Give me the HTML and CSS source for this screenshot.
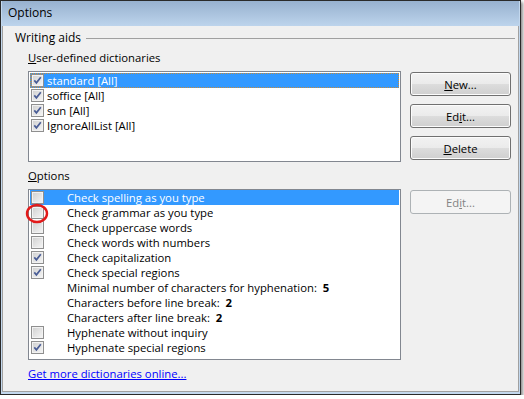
FILE: index.html
```html
<!DOCTYPE html>
<html lang="en">
<head>
    <meta charset="UTF-8">
    <title>Options</title>
    <link rel="stylesheet" href="styles.css">
</head>
<body>
    <div class="window">
        <div class="titlebar">Options</div>
        <div class="client">
            <div class="group-title"><span>Writing aids</span></div>
            <div class="group-body">
                <div class="field-label"><u>U</u>ser-defined dictionaries</div>
                <div class="field-row">
                    <div class="listbox dicts">
                        <div class="item selected focused"><span class="check on"></span><span class="name">standard [All]</span></div>
                        <div class="item"><span class="check on"></span><span class="name">soffice [All]</span></div>
                        <div class="item"><span class="check on"></span><span class="name">sun [All]</span></div>
                        <div class="item"><span class="check on"></span><span class="name">IgnoreAllList [All]</span></div>
                    </div>
                    <div class="buttons">
                        <button class="btn"><u>N</u>ew...</button>
                        <button class="btn">Ed<u>i</u>t...</button>
                        <button class="btn"><u>D</u>elete</button>
                    </div>
                </div>

                <div class="field-label options-label"><u>O</u>ptions</div>
                <div class="field-row">
                    <div class="listbox opts">
                        <div class="item selected"><span class="check"></span><span class="name">Check spelling as you type</span></div>
                        <div class="item"><span class="check"></span><span class="name">Check grammar as you type</span></div>
                        <div class="item"><span class="check"></span><span class="name">Check uppercase words</span></div>
                        <div class="item"><span class="check"></span><span class="name">Check words with numbers</span></div>
                        <div class="item"><span class="check on"></span><span class="name">Check capitalization</span></div>
                        <div class="item"><span class="check on"></span><span class="name">Check special regions</span></div>
                        <div class="item"><span class="nocheck"></span><span class="name">Minimal number of characters for hyphenation:&nbsp; <b>5</b></span></div>
                        <div class="item"><span class="nocheck"></span><span class="name">Characters before line break:&nbsp; <b>2</b></span></div>
                        <div class="item"><span class="nocheck"></span><span class="name">Characters after line break:&nbsp; <b>2</b></span></div>
                        <div class="item"><span class="check"></span><span class="name">Hyphenate without inquiry</span></div>
                        <div class="item"><span class="check on"></span><span class="name">Hyphenate special regions</span></div>
                    </div>
                    <div class="buttons">
                        <button class="btn" disabled>Ed<u>i</u>t...</button>
                    </div>
                </div>
            </div>
            <a class="more" href="#">Get more dictionaries online...</a>
        </div>
        <svg class="marker" width="26" height="22" viewBox="0 0 26 22">
            <ellipse cx="12" cy="10.5" rx="10" ry="8.5" fill="none" stroke="#e21a1a" stroke-width="2.4"/>
        </svg>
    </div>
</body>
</html>
```

FILE: styles.css
```css
body {
    margin: 0;
    background: #fff;
    font-family: "Open Sans", "Noto Sans", sans-serif;
    font-size: 11.3px;
    color: #000;
}
.window {
    position: relative;
    width: 521px;
    height: 395px;
    box-sizing: border-box;
    border: 1px solid #2a2a2a;
    padding: 0 1px 2px 1px;
    background: #c3d8ee;
    box-shadow: 2px 2px 3px rgba(0, 0, 0, 0.45);
    display: flex;
    flex-direction: column;
}
.titlebar {
    height: 25px;
    line-height: 24px;
    padding-left: 6px;
    font-size: 12px;
    background: linear-gradient(#97b1cf, #bdd4ec);
    flex: none;
}
.client {
    flex: 1;
    background: #f0f0f0;
    border: 1px solid #a0a0a0;
    border-top: none;
    padding: 4px 0 0 12px;
}
.group-title {
    display: flex;
    align-items: center;
    line-height: 16px;
    font-size: 12px;
}
.group-title::after {
    content: "";
    flex: 1;
    border-top: 1px solid #a0a0a0;
    margin: 1px 3px 0 5px;
}
.group-body {
    padding-left: 13px;
    margin-top: 4px;
}
.field-label {
    line-height: 16px;
}
.options-label {
    margin-top: 6px;
}
.field-row {
    display: flex;
    align-items: flex-start;
    gap: 9px;
    margin-top: 5px;
}
.listbox {
    width: 373px;
    box-sizing: border-box;
    border: 1px solid #828790;
    background: #fff;
    padding: 1px;
}
.dicts {
    height: 91px;
}
.opts {
    height: 171px;
    padding-top: 0;
}
.item {
    height: 15px;
    line-height: 15px;
    display: flex;
    align-items: center;
    white-space: nowrap;
    box-sizing: border-box;
}
.item.selected {
    background: #3399ff;
    color: #fff;
}
.item.focused {
    outline: 1px dotted #c78a3a;
    outline-offset: -1px;
}
.check {
    width: 13px;
    height: 13px;
    box-sizing: border-box;
    margin-left: 1px;
    border: 1px solid #8f8f8f;
    background: linear-gradient(135deg, #cfcfcf, #f6f6f6);
    box-shadow: inset 0 0 0 1px #f2f2f2;
    flex: none;
}
.check.on {
    background:
        url("data:image/svg+xml,%3Csvg xmlns='http://www.w3.org/2000/svg' width='11' height='11'%3E%3Cpath d='M2.3 5.4 L4.4 7.8 L8.8 2.2' fill='none' stroke='%234a5d96' stroke-width='1.7'/%3E%3C/svg%3E") center no-repeat,
        linear-gradient(135deg, #cfcfcf, #f6f6f6);
}
.nocheck {
    width: 13px;
    margin-left: 1px;
    flex: none;
}
.dicts .name {
    margin-left: 3px;
}
.opts .name {
    margin-left: 23px;
}
.buttons {
    display: flex;
    flex-direction: column;
    gap: 8px;
    margin-top: 1px;
}
.btn {
    width: 101px;
    height: 24px;
    font: inherit;
    color: #000;
    border: 1px solid #707070;
    border-radius: 3px;
    background: linear-gradient(#f2f2f2 0%, #ebebeb 49%, #dddddd 50%, #cfcfcf 100%);
    box-shadow: inset 0 0 0 1px #fcfcfc;
    padding: 0;
}
.btn:disabled {
    color: #838383;
    border-color: #adb2b5;
    background: #f4f4f4;
    box-shadow: none;
}
.more {
    display: inline-block;
    margin: 6px 0 0 13px;
    line-height: 16px;
    color: #0000ff;
}
.marker {
    position: absolute;
    left: 24px;
    top: 202px;
}
```
